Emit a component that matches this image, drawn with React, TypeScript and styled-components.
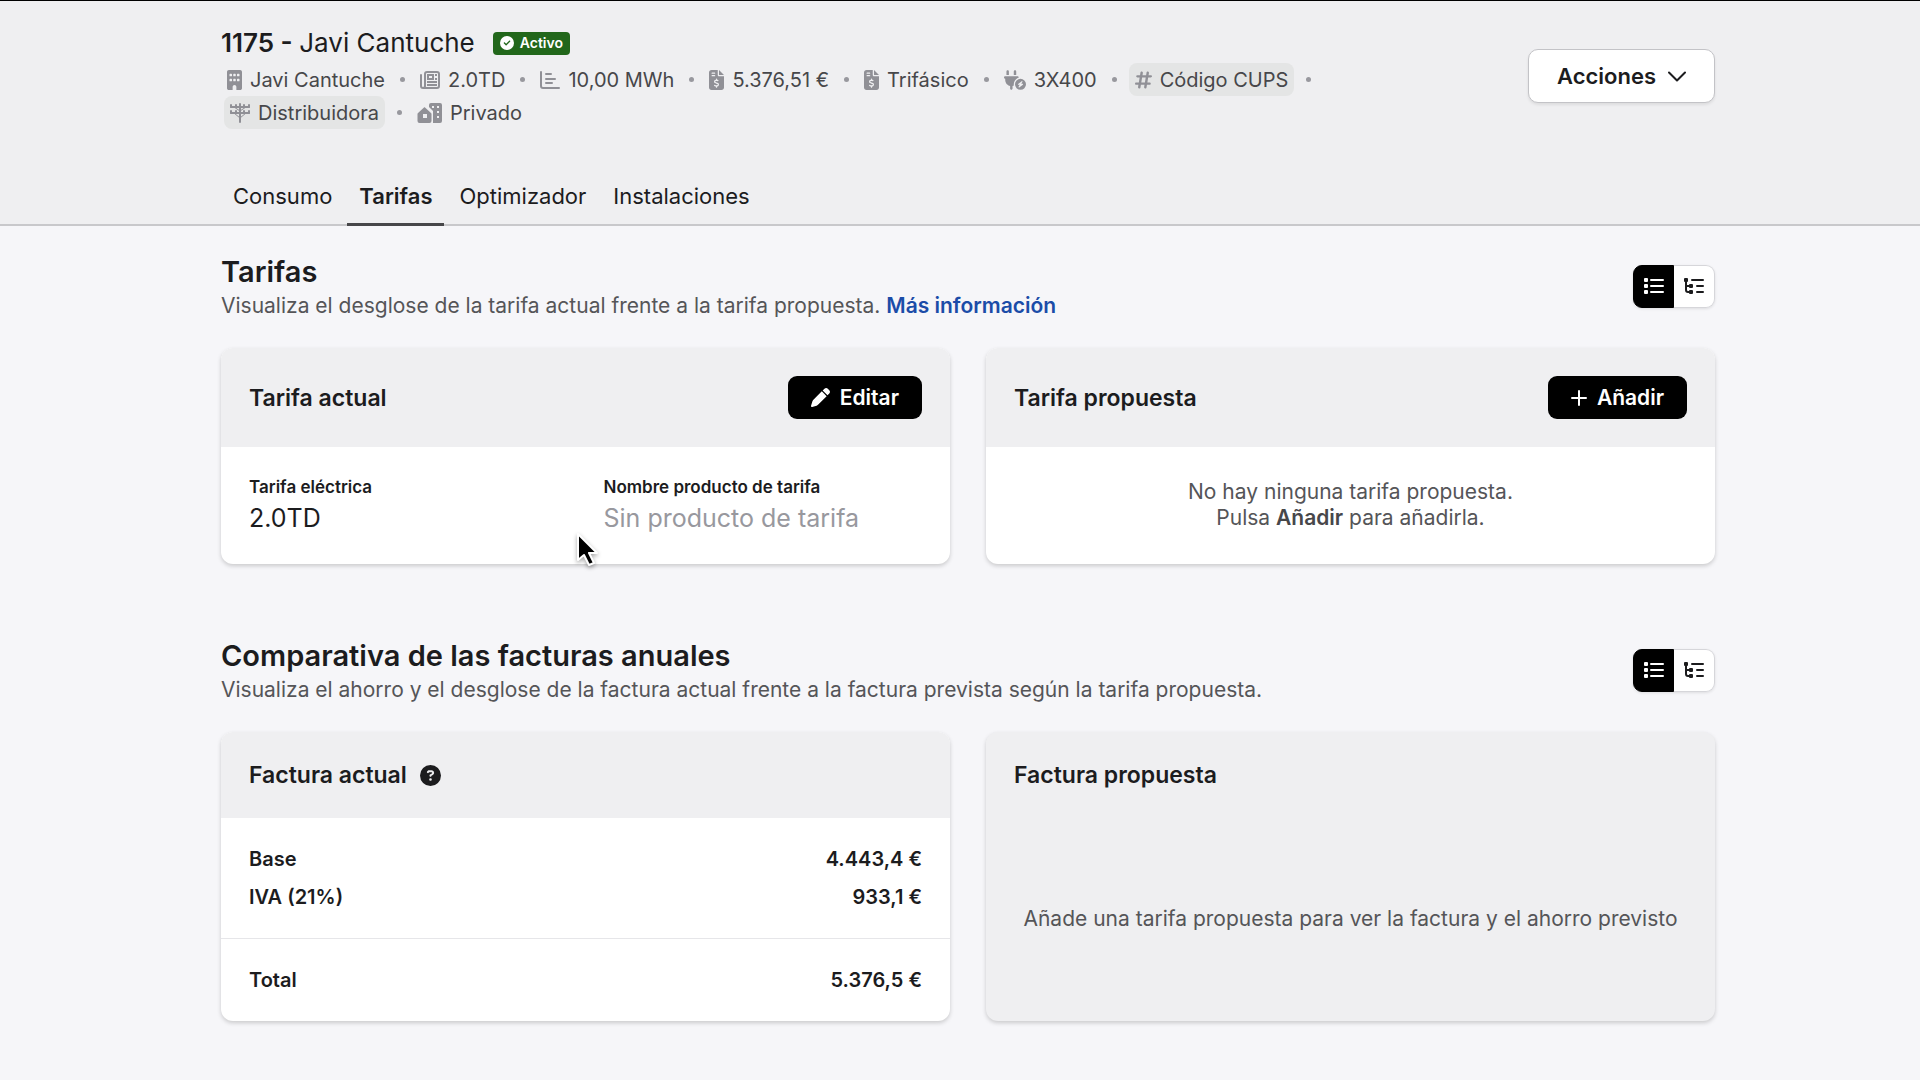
import React from "react";
import styled, { createGlobalStyle, css } from "styled-components";
import {
  FaBuilding,
  FaFileInvoiceDollar,
  FaPlugCircleBolt,
  FaHashtag,
  FaPen,
  FaCircleCheck,
  FaCircleQuestion,
} from "react-icons/fa6";

const GlobalStyle = createGlobalStyle`
  *, *::before, *::after { box-sizing: border-box; }
  body {
    margin: 0;
    min-height: 100vh;
    background: #f6f6f9;
    color: #1c1c1e;
    font-family: Inter, "Open Sans", sans-serif;
    font-size: 20px;
    line-height: 26px;
    -webkit-font-smoothing: antialiased;
  }
  button, a { font-family: inherit; }
  svg { display: block; flex: none; }
`;

const gutters = css`
  padding-left: 221px;
  padding-right: 205px;
`;

const Header = styled.header`
  ${gutters}
  background: #efeff1;
  border-top: 1px solid #000;
  border-bottom: 2px solid #c8c8cb;
`;

const HeaderTop = styled.div`
  display: flex;
  align-items: flex-start;
  justify-content: space-between;
  padding: 25px 0 42px;
`;

const Identity = styled.div`
  display: flex;
  flex-direction: column;
  gap: 3px;
  max-width: 1120px;
`;

const TitleRow = styled.div`
  display: flex;
  align-items: center;
  gap: 18px;
  height: 34px;
`;

const Title = styled.h1`
  margin: 0;
  font-size: 26px;
  line-height: 34px;
  font-weight: 400;
  white-space: pre;
  b { font-weight: 600; }
`;

const Badge = styled.span`
  display: flex;
  align-items: center;
  gap: 6px;
  height: 23px;
  padding: 0 7px;
  border-radius: 4px;
  background: #22671b;
  color: #fff;
  font-size: 14px;
  font-weight: 600;
`;

const MetaList = styled.ul`
  display: flex;
  flex-wrap: wrap;
  margin: 0;
  padding: 0;
  list-style: none;
`;

const MetaItem = styled.li`
  display: flex;
  align-items: center;
  color: #47474a;
  &:not(:last-child)::after {
    content: "";
    width: 5px;
    height: 5px;
    margin: 0 9px;
    border-radius: 50%;
    background: #98989e;
  }
`;

const MetaTag = styled.span<{ $filled?: boolean; $iconWidth: number }>`
  display: flex;
  align-items: center;
  gap: 8px;
  height: 33px;
  margin: 0 ${(p) => (p.$filled ? "3px" : "0")};
  padding: 0 6px;
  border-radius: 8px;
  background: ${(p) => (p.$filled ? "#e4e5e5" : "transparent")};
  svg {
    width: ${(p) => p.$iconWidth}px;
    height: 20px;
    color: #909096;
  }
`;

const Tabs = styled.nav`
  display: flex;
  gap: 3px;
`;

const Tab = styled.a<{ $active?: boolean }>`
  padding: 10px 12px 12px;
  margin-bottom: -2px;
  border-bottom: 3px solid ${(p) => (p.$active ? "#47474a" : "transparent")};
  color: #1c1c1e;
  font-size: 22px;
  line-height: 30px;
  font-weight: ${(p) => (p.$active ? 600 : 400)};
  text-decoration: none;
`;

const ActionsButton = styled.button`
  display: flex;
  align-items: center;
  gap: 12px;
  height: 54px;
  margin-top: 23px;
  padding: 0 28px;
  border: 1px solid #c3c3c7;
  border-radius: 10px;
  background: #fff;
  box-shadow: 0 2px 3px rgba(0, 0, 0, 0.08);
  color: #1c1c1e;
  font-size: 22px;
  font-weight: 600;
`;

const Main = styled.main`
  ${gutters}
  display: flex;
  flex-direction: column;
  gap: 72px;
  padding-top: 26px;
  padding-bottom: 58px;
`;

const Section = styled.section`
  display: flex;
  flex-direction: column;
  gap: 28px;
`;

const SectionHead = styled.div`
  display: flex;
  align-items: center;
  justify-content: space-between;
`;

const SectionTitle = styled.h2`
  margin: 0;
  font-size: 29px;
  line-height: 39px;
  font-weight: 600;
`;

const Description = styled.p`
  margin: 0;
  color: #555558;
  font-size: 21px;
  line-height: 29px;
`;

const InfoLink = styled.a`
  color: #1b4ca8;
  font-weight: 600;
  text-decoration: none;
`;

const Toggle = styled.div`
  display: flex;
  height: 43px;
  border-radius: 9px;
  box-shadow: 0 1px 3px rgba(0, 0, 0, 0.1);
`;

const ToggleButton = styled.button<{ $active?: boolean }>`
  display: flex;
  align-items: center;
  justify-content: center;
  width: 41px;
  padding: 0;
  border: 1px solid ${(p) => (p.$active ? "#000" : "#d6d6da")};
  background: ${(p) => (p.$active ? "#000" : "#fff")};
  color: ${(p) => (p.$active ? "#fff" : "#1c1c1e")};
  &:first-child { border-radius: 9px 0 0 9px; }
  &:last-child { border-radius: 0 9px 9px 0; border-left: 0; }
`;

const Cards = styled.div`
  display: grid;
  grid-template-columns: 1fr 1fr;
  gap: 36px;
`;

const Card = styled.article<{ $muted?: boolean }>`
  display: flex;
  flex-direction: column;
  overflow: hidden;
  border-radius: 12px;
  background: ${(p) => (p.$muted ? "#efeff1" : "#fff")};
  box-shadow: 0 2px 4px rgba(0, 0, 0, 0.18);
`;

const CardHead = styled.div`
  display: flex;
  align-items: center;
  justify-content: space-between;
  padding: 28px;
  background: #efeff1;
`;

const CardTitle = styled.h3`
  display: flex;
  align-items: center;
  gap: 13px;
  margin: 0;
  font-size: 23px;
  line-height: 30px;
  font-weight: 600;
`;

const PrimaryButton = styled.button`
  display: flex;
  align-items: center;
  gap: 10px;
  height: 43px;
  padding: 0 23px;
  border: 0;
  border-radius: 9px;
  background: #000;
  color: #fff;
  font-size: 21px;
  font-weight: 600;
`;

const Fields = styled.dl`
  display: grid;
  grid-template-columns: 1fr 1fr;
  gap: 36px;
  margin: 0;
  padding: 28px;
`;

const FieldLabel = styled.dt`
  font-size: 17px;
  line-height: 25px;
  font-weight: 600;
`;

const FieldValue = styled.dd<{ $empty?: boolean }>`
  margin: 0;
  color: ${(p) => (p.$empty ? "#98989e" : "#1c1c1e")};
  font-size: 25px;
  line-height: 36px;
`;

const Empty = styled.div`
  display: flex;
  flex: 1;
  flex-direction: column;
  align-items: center;
  justify-content: center;
  padding: 28px 28px 30px;
  color: #555558;
  font-size: 21px;
  text-align: center;
  b { font-weight: 600; color: #47474a; }
`;

const Invoice = styled.table`
  width: 100%;
  border-collapse: collapse;
  font-weight: 600;
  th { text-align: left; font-weight: 600; }
  td { text-align: right; }
  th, td { padding: 6px 28px; }
  tbody tr:first-child > * { padding-top: 28px; }
  tbody tr:last-child > * { padding-bottom: 28px; }
  tfoot th, tfoot td { padding: 28px; border-top: 1px solid #e6e6e9; }
`;

const Cursor = styled.svg`
  position: absolute;
  left: 574px;
  top: 530px;
  filter: drop-shadow(0 2px 2px rgba(0, 0, 0, 0.35));
`;

const NewspaperIcon = () => (
  <svg viewBox="0 0 20 20" fill="none" stroke="currentColor" strokeWidth="2">
    <path d="M5 4a2 2 0 0 1 2-2h10a2 2 0 0 1 2 2v12a2 2 0 0 1-2 2H3a2 2 0 0 1-2-2V5" strokeLinecap="round" />
    <path d="M5 4v12a2 2 0 0 1-2 2" />
    <path d="M8 5h5v4H8zM15 5h2M15 9h2M7 12h10M7 15h10" />
  </svg>
);

const ChartIcon = () => (
  <svg viewBox="0 0 20 20" fill="none" stroke="currentColor" strokeWidth="2" strokeLinecap="round">
    <path d="M1 2v14a2 2 0 0 0 2 2h16M6 4h5M6 9h9M6 13h6" />
  </svg>
);

const PoleIcon = () => (
  <svg viewBox="0 0 20 20" fill="none" stroke="currentColor" strokeLinecap="round">
    <path d="M10 1v18M1 4h18M1 10h18" strokeWidth="2" />
    <path d="M1 2v2M6 2v2M14 2v2M19 2v2M1 8v2M6 8v2M14 8v2M19 8v2" strokeWidth="2" />
    <path d="M4 4l6 4 6-4M4 10l6 5 6-5" strokeWidth="1" />
  </svg>
);

const HouseBuildingIcon = () => (
  <svg viewBox="0 0 25 20" fill="currentColor" fillRule="evenodd">
    <path d="M14 0h9a2 2 0 0 1 2 2v16a2 2 0 0 1-2 2h-7V8l-4-4V2a2 2 0 0 1 2-2zM15 3v2h2V3zM20 3v2h2V3zM20 8v2h2V8zM20 13v2h2v-2z" />
    <path d="M7 4q.500 0 1 .500l6 5.500q.500.500.500 1v7a2 2 0 0 1-2 2h-10a2 2 0 0 1-2-2v-7q0-.500.500-1l6-5.500q.500-.500 0-.500zM6 11v4h4v-4z" />
  </svg>
);

const ChevronIcon = () => (
  <svg width="18" height="11" viewBox="0 0 18 11" fill="none" stroke="currentColor" strokeWidth="2" strokeLinecap="round" strokeLinejoin="round">
    <path d="M1 1.500l8 8 8-8" />
  </svg>
);

const PlusIcon = () => (
  <svg width="16" height="16" viewBox="0 0 16 16" fill="none" stroke="currentColor" strokeWidth="2" strokeLinecap="round">
    <path d="M8 1v14M1 8h14" />
  </svg>
);

const ListIcon = () => (
  <svg width="20" height="17" viewBox="0 0 20 17" fill="currentColor">
    {[0, 6, 12].map((y) => (
      <React.Fragment key={y}>
        <rect x="0" y={y} width="4" height="4" rx="1" />
        <rect x="6" y={y + 1} width="14" height="2" rx="1" />
      </React.Fragment>
    ))}
  </svg>
);

const TreeIcon = () => (
  <svg width="20" height="17" viewBox="0 0 20 17" fill="currentColor">
    <path d="M2 3v9a2 2 0 0 0 2 2h2M2 8h4" fill="none" stroke="currentColor" strokeWidth="2" />
    <rect x="0" y="0" width="4" height="4" rx="1" />
    <rect x="5" y="6" width="4" height="4" rx="1" />
    <rect x="5" y="12" width="4" height="4" rx="1" />
    <rect x="7" y="1" width="13" height="2" rx="1" />
    <rect x="12" y="7" width="8" height="2" rx="1" />
    <rect x="12" y="13" width="8" height="2" rx="1" />
  </svg>
);

const meta = [
  { icon: <FaBuilding />, width: 15, text: "Javi Cantuche" },
  { icon: <NewspaperIcon />, width: 20, text: "2.0TD" },
  { icon: <ChartIcon />, width: 20, text: "10,00 MWh" },
  { icon: <FaFileInvoiceDollar />, width: 15, text: "5.376,51 €" },
  { icon: <FaFileInvoiceDollar />, width: 15, text: "Trifásico" },
  { icon: <FaPlugCircleBolt />, width: 22, text: "3X400" },
  { icon: <FaHashtag />, width: 17, text: "Código CUPS", filled: true },
  { icon: <PoleIcon />, width: 20, text: "Distribuidora", filled: true },
  { icon: <HouseBuildingIcon />, width: 25, text: "Privado" },
];

const tabs = ["Consumo", "Tarifas", "Optimizador", "Instalaciones"];

function ViewToggle() {
  return (
    <Toggle role="group" aria-label="Vista">
      <ToggleButton $active aria-pressed="true" aria-label="Lista"><ListIcon /></ToggleButton>
      <ToggleButton aria-pressed="false" aria-label="Desglose"><TreeIcon /></ToggleButton>
    </Toggle>
  );
}

export default function App() {
  return (
    <>
      <GlobalStyle />
      <Header>
        <HeaderTop>
          <Identity>
            <TitleRow>
              <Title><b>1175 - </b>Javi Cantuche</Title>
              <Badge><FaCircleCheck size={14} />Activo</Badge>
            </TitleRow>
            <MetaList>
              {meta.map((m) => (
                <MetaItem key={m.text}>
                  <MetaTag $filled={m.filled} $iconWidth={m.width}>{m.icon}{m.text}</MetaTag>
                </MetaItem>
              ))}
            </MetaList>
          </Identity>
          <ActionsButton>Acciones<ChevronIcon /></ActionsButton>
        </HeaderTop>
        <Tabs>
          {tabs.map((t) => (
            <Tab key={t} href="#" $active={t === "Tarifas"}>{t}</Tab>
          ))}
        </Tabs>
      </Header>
      <Main>
        <Section>
          <SectionHead>
            <div>
              <SectionTitle>Tarifas</SectionTitle>
              <Description>
                Visualiza el desglose de la tarifa actual frente a la tarifa propuesta. <InfoLink href="#">Más información</InfoLink>
              </Description>
            </div>
            <ViewToggle />
          </SectionHead>
          <Cards>
            <Card>
              <CardHead>
                <CardTitle>Tarifa actual</CardTitle>
                <PrimaryButton><FaPen size={19} />Editar</PrimaryButton>
              </CardHead>
              <Fields>
                <div>
                  <FieldLabel>Tarifa eléctrica</FieldLabel>
                  <FieldValue>2.0TD</FieldValue>
                </div>
                <div>
                  <FieldLabel>Nombre producto de tarifa</FieldLabel>
                  <FieldValue $empty>Sin producto de tarifa</FieldValue>
                </div>
              </Fields>
            </Card>
            <Card>
              <CardHead>
                <CardTitle>Tarifa propuesta</CardTitle>
                <PrimaryButton><PlusIcon />Añadir</PrimaryButton>
              </CardHead>
              <Empty>
                <span>No hay ninguna tarifa propuesta.</span>
                <span>Pulsa <b>Añadir</b> para añadirla.</span>
              </Empty>
            </Card>
          </Cards>
        </Section>
        <Section>
          <SectionHead>
            <div>
              <SectionTitle>Comparativa de las facturas anuales</SectionTitle>
              <Description>
                Visualiza el ahorro y el desglose de la factura actual frente a la factura prevista según la tarifa propuesta.
              </Description>
            </div>
            <ViewToggle />
          </SectionHead>
          <Cards>
            <Card>
              <CardHead>
                <CardTitle>Factura actual<FaCircleQuestion size={21} /></CardTitle>
              </CardHead>
              <Invoice>
                <tbody>
                  <tr><th scope="row">Base</th><td>4.443,4 €</td></tr>
                  <tr><th scope="row">IVA (21%)</th><td>933,1 €</td></tr>
                </tbody>
                <tfoot>
                  <tr><th scope="row">Total</th><td>5.376,5 €</td></tr>
                </tfoot>
              </Invoice>
            </Card>
            <Card $muted>
              <CardHead>
                <CardTitle>Factura propuesta</CardTitle>
              </CardHead>
              <Empty>Añade una tarifa propuesta para ver la factura y el ahorro previsto</Empty>
            </Card>
          </Cards>
        </Section>
      </Main>
      <Cursor width="24" height="38" viewBox="0 0 24 38" aria-hidden="true">
        <path d="M4 4v26l6-5 5 10 5-2-5-10h8z" fill="#000" stroke="#fff" strokeWidth="2" strokeLinejoin="round" />
      </Cursor>
    </>
  );
}
